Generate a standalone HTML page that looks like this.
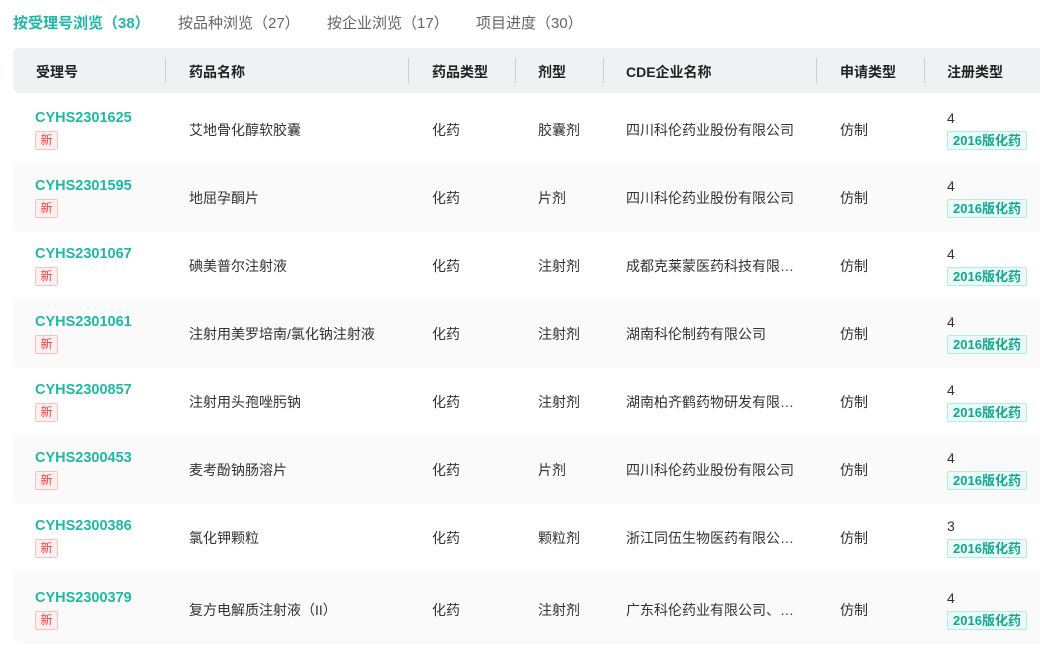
<!DOCTYPE html><html><head><meta charset="utf-8"><style>
body{margin:0;width:1040px;height:658px;background:#fff;font-family:"Liberation Sans","Noto Sans CJK SC",sans-serif;overflow:hidden;position:relative;color:#333}
.tab{position:absolute;top:12px;font-size:15px;color:#666}
.tab.a{color:#20b8a4;font-weight:bold}
.hd{position:absolute;left:13px;top:48px;width:1040px;height:45px;background:#eff2f3;border-radius:6px 0 0 6px}
.hd span{position:absolute;top:14px;font-size:14px;font-weight:bold;color:#222}
.hd i{position:absolute;top:10px;width:1px;height:25px;background:#c8cfd1}
.row{position:absolute;left:13px;width:1040px;height:68px}
.row.g{background:#fafafa}
.row div{position:absolute;font-size:14px;color:#333;white-space:nowrap}
.row .id{color:#20b8a4;font-weight:bold;font-size:14.5px}
.row .new{position:absolute;font-size:12px;color:#f04040;background:#fff0f0;border:1px solid #f9c0c0;border-radius:2px;width:21px;height:17px;line-height:17px;text-align:center}
.row .tag{font-size:13px;color:#12a98f;background:#ebfaf6;border:1px solid #b5ece0;border-radius:2px;box-sizing:border-box;width:80px;text-align:center;height:19px;line-height:17px;font-weight:bold}
</style></head><body>
<div class="tab a" style="left:13px">按受理号浏览（38）</div>
<div class="tab" style="left:178px">按品种浏览（27）</div>
<div class="tab" style="left:327px">按企业浏览（17）</div>
<div class="tab" style="left:476px">项目进度（30）</div>
<div class="hd">
<span style="left:23px">受理号</span><i style="left:152px"></i>
<span style="left:176px">药品名称</span><i style="left:395px"></i>
<span style="left:419px">药品类型</span><i style="left:502px"></i>
<span style="left:525px">剂型</span><i style="left:590px"></i>
<span style="left:613px">CDE企业名称</span><i style="left:803px"></i>
<span style="left:827px">申请类型</span><i style="left:911px"></i>
<span style="left:934px">注册类型</span>
</div>
<div id="rows"></div>
<script>
var d=[["CYHS2301625","艾地骨化醇软胶囊","胶囊剂","四川科伦药业股份有限公司","4"],
["CYHS2301595","地屈孕酮片","片剂","四川科伦药业股份有限公司","4"],
["CYHS2301067","碘美普尔注射液","注射剂","成都克莱蒙医药科技有限…","4"],
["CYHS2301061","注射用美罗培南/氯化钠注射液","注射剂","湖南科伦制药有限公司","4"],
["CYHS2300857","注射用头孢唑肟钠","注射剂","湖南柏齐鹤药物研发有限…","4"],
["CYHS2300453","麦考酚钠肠溶片","片剂","四川科伦药业股份有限公司","4"],
["CYHS2300386","氯化钾颗粒","颗粒剂","浙江同伍生物医药有限公…","3"],
["CYHS2300379","复方电解质注射液（II）","注射剂","广东科伦药业有限公司、…","4"]];
var h="";d.forEach(function(r,i){var t=95+68*i,hh=i==7?73:68,o=i==7?4:0;
h+='<div class="row'+(i%2?' g':'')+'" style="top:'+t+'px;height:'+hh+'px;'+(i==7?'border-radius:0 0 0 8px':'')+'">'+
'<div class="id" style="left:22px;top:'+(15+o)+'px">'+r[0]+'</div><div class="new" style="left:22px;top:'+(36+o)+'px">新</div>'+
'<div style="left:176px;top:'+(25+o)+'px">'+r[1]+'</div><div style="left:419px;top:'+(25+o)+'px">化药</div>'+
'<div style="left:525px;top:'+(25+o)+'px">'+r[2]+'</div><div style="left:613px;top:'+(25+o)+'px">'+r[3]+'</div>'+
'<div style="left:827px;top:'+(25+o)+'px">仿制</div><div style="left:934px;top:'+(15+o)+'px">'+r[4]+'</div>'+
'<div class="tag" style="left:934px;top:'+(36+o)+'px">2016版化药</div></div>';});
document.getElementById("rows").innerHTML=h;
</script>
</body></html>
